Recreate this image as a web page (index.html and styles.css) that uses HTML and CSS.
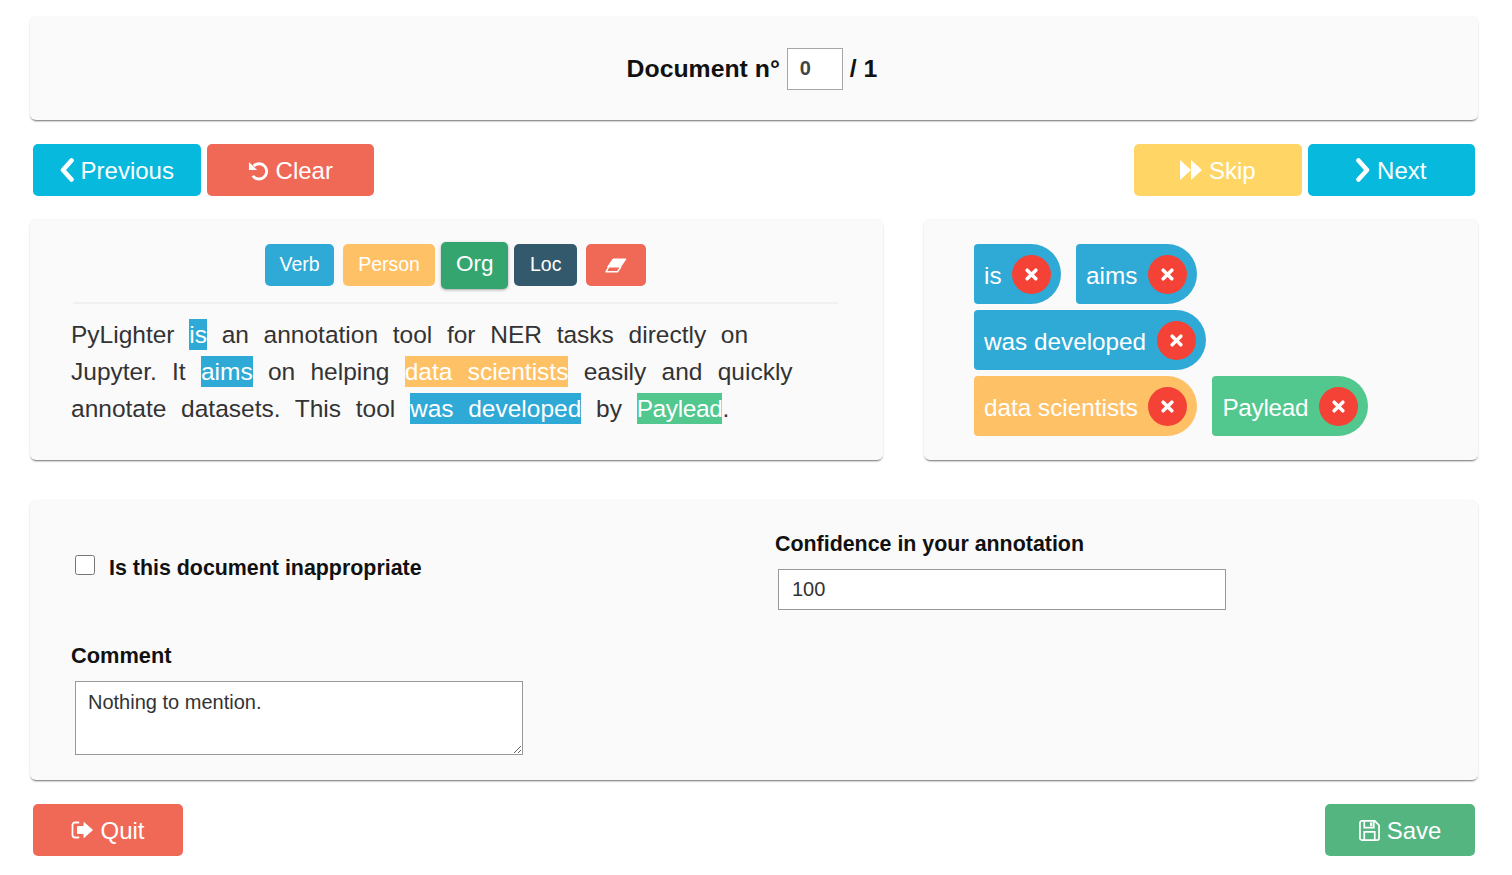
FILE: index.html
```html
<!DOCTYPE html>
<html lang="en">
<head>
<meta charset="utf-8">
<title>PyLighter</title>
<link rel="stylesheet" href="styles.css">
</head>
<body>
<main class="page">
  <section class="card doc-card">
    <span class="doc-title">Document n°</span>
    <input class="doc-input" type="text" value="0" aria-label="Document number">
    <span class="doc-title">/ 1</span>
  </section>

  <nav class="toolbar">
    <div class="btn-group">
      <button class="btn btn-blue"><svg class="icon icon-chev" viewBox="0 0 14 24"><path d="M11.500 2.500 3 12l8.500 9.500" fill="none" stroke="currentColor" stroke-width="4.600" stroke-linecap="round" stroke-linejoin="round"/></svg>Previous</button>
      <button class="btn btn-red"><svg class="icon icon-undo" viewBox="0 0 22 22"><path d="M6 6.200A8 8 0 1 1 5 16.500" fill="none" stroke="currentColor" stroke-width="3"/><path d="M1 2v8.500h8.500z" fill="currentColor"/></svg>Clear</button>
    </div>
    <div class="btn-group">
      <button class="btn btn-yellow"><svg class="icon icon-ff" viewBox="0 0 22 20"><path d="M0 0v20l11-10zM11 0v20l11-10z" fill="currentColor"/></svg>Skip</button>
      <button class="btn btn-blue"><svg class="icon icon-chev" viewBox="0 0 14 24"><path d="M2.500 2.500 11 12l-8.500 9.500" fill="none" stroke="currentColor" stroke-width="4.600" stroke-linecap="round" stroke-linejoin="round"/></svg>Next</button>
    </div>
  </nav>

  <div class="columns">
    <section class="card text-card">
      <div class="labels">
        <button class="label bg-verb">Verb</button>
        <button class="label label-person bg-person">Person</button>
        <button class="label label-active bg-org">Org</button>
        <button class="label label-loc bg-loc">Loc</button>
        <button class="label label-eraser bg-erase" aria-label="Eraser"><svg class="icon-eraser" viewBox="0 0 22 15"><path d="M4 8.500 1 13.800H12.500L16 8.500" fill="none" stroke="currentColor" stroke-width="1.500" stroke-linejoin="round"/><path d="M8 1H21L15.500 9H2.500z" fill="currentColor" stroke="currentColor" stroke-width="1" stroke-linejoin="round"/></svg></button>
      </div>
      <hr class="rule">
      <p class="doc-text">PyLighter <mark class="hl bg-verb">is</mark> an annotation tool for NER tasks directly on<br><span class="line-wide">Jupyter. It <mark class="hl bg-verb">aims</mark> on helping <mark class="hl bg-person">data scientists</mark> easily and quickly</span><br>annotate datasets. This tool <mark class="hl bg-verb">was developed</mark> by <mark class="hl hl-tight bg-paylead">Paylead</mark>.</p>
    </section>

    <section class="card chip-card">
      <div class="chip-row">
        <span class="chip bg-verb">is<span class="chip-x"><svg viewBox="0 0 12 12"><path d="M2 2l8 8M10 2l-8 8" stroke="currentColor" stroke-width="3.200" stroke-linecap="round"/></svg></span></span>
        <span class="chip bg-verb">aims<span class="chip-x"><svg viewBox="0 0 12 12"><path d="M2 2l8 8M10 2l-8 8" stroke="currentColor" stroke-width="3.200" stroke-linecap="round"/></svg></span></span>
      </div>
      <div class="chip-row">
        <span class="chip bg-verb">was developed<span class="chip-x"><svg viewBox="0 0 12 12"><path d="M2 2l8 8M10 2l-8 8" stroke="currentColor" stroke-width="3.200" stroke-linecap="round"/></svg></span></span>
      </div>
      <div class="chip-row">
        <span class="chip bg-person">data scientists<span class="chip-x"><svg viewBox="0 0 12 12"><path d="M2 2l8 8M10 2l-8 8" stroke="currentColor" stroke-width="3.200" stroke-linecap="round"/></svg></span></span>
        <span class="chip chip-tight bg-paylead">Paylead<span class="chip-x"><svg viewBox="0 0 12 12"><path d="M2 2l8 8M10 2l-8 8" stroke="currentColor" stroke-width="3.200" stroke-linecap="round"/></svg></span></span>
      </div>
    </section>
  </div>

  <section class="card form-card">
    <div class="form-left">
      <label class="check-row"><input class="check" type="checkbox"><span>Is this document inappropriate</span></label>
      <div class="comment-field">
        <label class="field-label field-label-short" for="comment">Comment</label>
        <textarea id="comment" class="comment">Nothing to mention.</textarea>
      </div>
    </div>
    <div class="form-right">
      <label class="field-label" for="confidence">Confidence in your annotation</label>
      <input id="confidence" class="confidence" type="text" value="100">
    </div>
  </section>

  <footer class="toolbar">
    <button class="btn btn-wide btn-red"><svg class="icon icon-quit" viewBox="0 0 22 20"><path d="M7.500 2.500H4A2.500 2.500 0 0 0 1.500 5v10A2.500 2.500 0 0 0 4 17.500h3.500" fill="none" stroke="currentColor" stroke-width="1.800" stroke-linecap="round"/><path d="M13 2.500 21.500 10 13 17.500V13.500H6.500v-7H13z" fill="currentColor" stroke="currentColor" stroke-width="1" stroke-linejoin="round"/></svg>Quit</button>
    <button class="btn btn-wide btn-green"><svg class="icon icon-save" viewBox="0 0 22 22"><path d="M1 3a2 2 0 0 1 2-2h13.500L21 5.500V19a2 2 0 0 1-2 2H3a2 2 0 0 1-2-2z" fill="none" stroke="currentColor" stroke-width="1.800"/><path d="M5.500 1.500v6.500h10V1.500M5.500 21v-8.500h11V21" fill="none" stroke="currentColor" stroke-width="1.800"/><path d="M11.500 2.500h2.500v4h-2.500z" fill="currentColor"/></svg>Save</button>
  </footer>
</main>
</body>
</html>
```

FILE: styles.css
```css
* { box-sizing: border-box; }

html, body { margin: 0; background: #fff; }

body {
  font-family: "Liberation Sans", Arial, sans-serif;
  color: #333;
}

.page { padding: 17px 34px 0 30px; }

.card {
  background: #fafafa;
  border-radius: 6px;
  box-shadow: 0 2px 2px -1px rgba(0, 0, 0, .55), 0 0 3px rgba(0, 0, 0, .08);
}

.doc-card {
  height: 103px;
  display: flex;
  align-items: center;
  justify-content: center;
  gap: 7px;
  padding-right: 4px;
}

.doc-title {
  font-size: 24.800px;
  font-weight: 700;
  color: #111;
  line-height: 30px;
  padding-top: 1px;
}

.doc-input {
  width: 56px;
  height: 42px;
  border: 1px solid #a6a6a6;
  background: #fff;
  padding: 0 12px;
  font: 700 20px "Liberation Sans", Arial, sans-serif;
  color: #444;
  border-radius: 0;
}

.toolbar {
  display: flex;
  justify-content: space-between;
  padding: 0 3px;
  margin-top: 24px;
}

.btn-group { display: flex; gap: 6px; }

.btn {
  width: 167.500px;
  height: 52px;
  border: 0;
  border-radius: 5px;
  color: #fff;
  font: 24px "Liberation Sans", Arial, sans-serif;
  display: flex;
  align-items: center;
  justify-content: center;
  gap: 7px;
  padding: 2px 0 0;
}

.btn-wide { width: 150px; }
.btn-blue { background: #06b9dd; }
.btn-red { background: #f06856; }
.btn-yellow { background: #ffd666; }
.btn-green { background: #54b581; }

.icon { display: block; flex: none; margin-top: -2px; }
.icon-chev { width: 14px; height: 24px; }
.icon-undo { width: 21px; height: 21px; }
.icon-ff { width: 22px; height: 20px; }
.icon-quit { width: 22px; height: 20px; }
.icon-save { width: 21px; height: 21px; }

.columns {
  display: grid;
  grid-template-columns: 853px 554px;
  gap: 41px;
  margin-top: 24px;
}

.text-card {
  height: 240px;
  padding: 24px 45px 0 41px;
}

.labels {
  display: flex;
  justify-content: center;
  align-items: center;
  gap: 9px;
  height: 42px;
  margin-left: 2px;
}

.label {
  height: 42px;
  padding: 0 14.500px 2px;
  border: 0;
  border-radius: 5px;
  color: #fff;
  font: 19.500px "Liberation Sans", Arial, sans-serif;
  white-space: nowrap;
}

.label-person { padding: 0 15px 2px; }
.label-loc { padding: 0 15.500px 2px; }

.label-active {
  height: 47px;
  margin: 0 -3px;
  padding: 0 15px 2px;
  font-size: 22.500px;
  box-shadow: 0 1px 3px rgba(0, 0, 0, .35);
}

.label-eraser {
  width: 60px;
  padding: 0;
  display: flex;
  align-items: center;
  justify-content: center;
}

.icon-eraser { width: 22px; height: 15px; display: block; }

.bg-verb { background: #2fa9d5; }
.bg-person { background: #ffc166; }
.bg-org { background: #34a56f; }
.bg-loc { background: #33596c; }
.bg-erase { background: #f06856; }
.bg-paylead { background: #52c78e; }

.rule {
  height: 2px;
  margin: 16px 0 0 2px;
  border: 0;
  background: #f0f0f0;
}

.doc-text {
  margin: 12px 0 0;
  font-size: 24.500px;
  line-height: 37px;
  word-spacing: 7.900px;
  color: #333;
  white-space: nowrap;
}

.line-wide { word-spacing: 8.450px; }

.hl {
  color: #fff;
  padding: 2px 0;
}

.hl-tight { letter-spacing: -.4px; }

.chip-card {
  height: 240px;
  padding: 24px 50px 0;
  display: flex;
  flex-direction: column;
  gap: 6px;
}

.chip-row { display: flex; gap: 15px; }

.chip {
  height: 60px;
  display: flex;
  align-items: center;
  gap: 10.500px;
  padding: 4px 10px 0 10px;
  border-radius: 4px 30px 30px 4px;
  color: #fff;
  font-size: 24.300px;
}

.chip-tight { letter-spacing: -.3px; }

.chip-x {
  width: 39px;
  height: 39px;
  border-radius: 50%;
  background: #f44336;
  display: flex;
  align-items: center;
  justify-content: center;
  margin-top: -4px;
}

.chip-x svg { width: 13px; height: 13px; display: block; }

.form-card {
  height: 279px;
  margin-top: 41px;
  padding: 31px 0 0 41px;
  display: grid;
  grid-template-columns: 704px 1fr;
}

.check-row {
  display: flex;
  align-items: center;
  gap: 14px;
  padding: 24px 0 0 4px;
  font-size: 21.400px;
  font-weight: 700;
  line-height: 24px;
  color: #111;
}

.check {
  width: 20px;
  height: 20px;
  margin: -6px 0 0;
  flex: none;
}

.comment-field { margin-top: 64px; }

.field-label {
  display: block;
  font-size: 21.400px;
  font-weight: 700;
  line-height: 24px;
  color: #111;
}

.field-label-short { font-size: 21.800px; }

.comment {
  display: block;
  width: 448px;
  height: 74px;
  margin: 13px 0 0 4px;
  padding: 9px 12px;
  border: 1px solid #999;
  border-radius: 0;
  background: #fff;
  font: 20px "Liberation Sans", Arial, sans-serif;
  color: #333;
}

.confidence {
  display: block;
  width: 448px;
  height: 41px;
  margin: 13px 0 0 3px;
  padding: 0 13px;
  border: 1px solid #999;
  background: #fff;
  font: 20px "Liberation Sans", Arial, sans-serif;
  color: #333;
  border-radius: 0;
}
```
